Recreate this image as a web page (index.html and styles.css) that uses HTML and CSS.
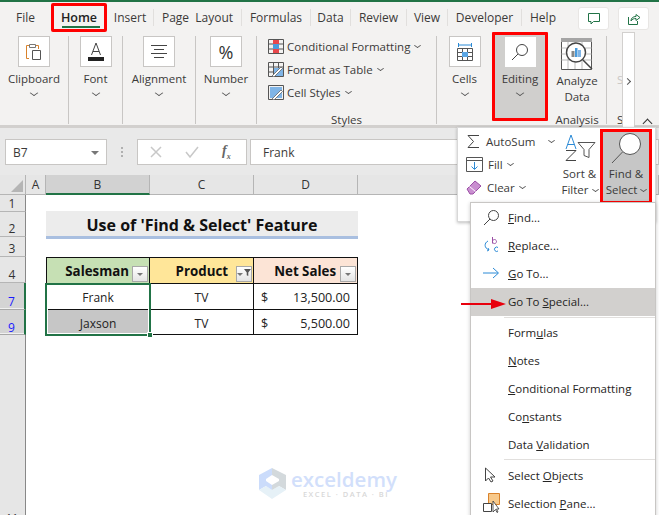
FILE: index.html
```html
<!DOCTYPE html>
<html lang="en">
<head>
<meta charset="utf-8">
<title>Find &amp; Select</title>
<link rel="stylesheet" href="styles.css">
</head>
<body>
<div class="app">
  <div class="topline"></div>
  <nav class="tabs">
    <span class="tab t-file">File</span>
    <span class="tab t-home active">Home</span>
    <span class="tab t-insert">Insert</span>
    <span class="tab t-page">Page Layout</span>
    <span class="tab t-form">Formulas</span>
    <span class="tab t-data">Data</span>
    <span class="tab t-review">Review</span>
    <span class="tab t-view">View</span>
    <span class="tab t-dev">Developer</span>
    <span class="tab t-help">Help</span>
    <span class="tabbtns">
      <span class="tabbtn"><svg width="14" height="14" viewBox="0 0 14 14"><path d="M1.500 1.500h11v8H6.500L4 12V9.500H1.500z" fill="none" stroke="#217346"/></svg></span>
      <span class="tabbtn"><svg width="14" height="14" viewBox="0 0 14 14"><path d="M1.500 5v7.500h9V9M4 9c0-3 2-4.500 5-4.500V2.500L13 5.500 9 8.500V6.500C7 6.500 5 7 4 9z" fill="none" stroke="#217346"/></svg></span>
    </span>
  </nav>
  <section class="ribbon">
    <div class="grp g-clip">
      <span class="bigbtn"><svg width="20" height="20" viewBox="0 0 20 20"><path d="M5 16.500H2.500V3.500H5M12 3.500h2.500V7" fill="none" stroke="#d9822b"/><path d="M5.500 2.500h6v3h-6z" fill="#fff" stroke="#777"/><path d="M8.500 8.500h8v9h-8z" fill="#fff" stroke="#555"/></svg></span>
      <span class="lbl">Clipboard</span><span class="chev"></span>
    </div>
    <div class="grp g-font">
      <span class="bigbtn"><svg width="20" height="22" viewBox="0 0 20 22"><path d="M5.500 14 10 2l4.500 12M7 10.500h6" fill="none" stroke="#444"/><path d="M2 16h16v4H2z" fill="#222"/></svg></span>
      <span class="lbl">Font</span><span class="chev"></span>
    </div>
    <div class="grp g-align">
      <span class="bigbtn"><svg width="20" height="20" viewBox="0 0 20 20"><path d="M2 3.500h16M5 7.500h10M2 11.500h16M5 15.500h10" stroke="#444"/></svg></span>
      <span class="lbl">Alignment</span><span class="chev"></span>
    </div>
    <div class="grp g-num">
      <span class="bigbtn"><span class="pct">%</span></span>
      <span class="lbl">Number</span><span class="chev"></span>
    </div>
    <div class="grp g-styles">
      <div class="stylelist">
        <div class="sl"><svg width="16" height="15" viewBox="0 0 16 15"><path d="M.5.500h15v14H.500zM5.500.500v14M10.500.500v14M.5 5h15M.5 10h15" fill="none" stroke="#555"/><path d="M5 1h6v4H5zM5 10h6v4H5z" fill="#e8474c"/><path d="M5 5h6v5H5z" fill="#4a9bdc"/></svg><span>Conditional Formatting</span><span class="chev inl"></span></div>
        <div class="sl"><svg width="16" height="15" viewBox="0 0 16 15"><path d="M.5.500h15v14H.500zM5.500.500v14M10.500.500v14M.5 5h15M.5 10h15" fill="none" stroke="#555"/><path d="M6 6h9v8H6z" fill="#7fb4e6"/><path d="M4 14 13 5l1.500 1.500L6 15z" fill="#fff" stroke="#555" stroke-width=".7"/></svg><span>Format as Table</span><span class="chev inl"></span></div>
        <div class="sl"><svg width="16" height="15" viewBox="0 0 16 15"><path d="M.5.500h15v14H.500z" fill="none" stroke="#555"/><path d="M2 2h12v11H2z" fill="#7fb4e6"/><path d="M4 14 13 5l1.500 1.500L6 15z" fill="#fff" stroke="#555" stroke-width=".7"/></svg><span>Cell Styles</span><span class="chev inl"></span></div>
      </div>
      <span class="grpname">Styles</span>
    </div>
    <div class="grp g-cells">
      <span class="bigbtn"><svg width="18" height="20" viewBox="0 0 18 20"><path d="M2.500 1v4M15.500 1v4M3 3h12" stroke="#2b8ad6" fill="none"/><path d="M1.500 6.500h15v12h-15zM6.500 6.500v12M11.500 6.500v12M1.500 10.500h15M1.500 14.500h15" fill="none" stroke="#555"/><path d="M6 10h6v5H6z" fill="#5ba6e4"/></svg></span>
      <span class="lbl">Cells</span><span class="chev"></span>
    </div>
    <div class="grp g-edit">
      <span class="bigbtn plain"><svg width="18" height="18" viewBox="0 0 18 18"><circle cx="11" cy="7" r="5.500" fill="#fff" stroke="#444"/><path d="M7 11 1 17" stroke="#444"/></svg></span>
      <span class="lbl">Editing</span><span class="chev"></span>
    </div>
    <div class="grp g-ana">
      <svg class="anaicon" width="32" height="32" viewBox="0 0 32 32"><path d="M.5 3.500h30v28H.5z" fill="#fff" stroke="#555"/><path d="M0 0h31v4H0z" fill="#a5a5a5"/><path d="M.5 10h30M.5 16h30M.5 22h30M7 4v27M14 4v27M21 4v27" stroke="#bbb"/><circle cx="15" cy="14.500" r="9.500" fill="#fff" stroke="#444" stroke-width="1.500"/><path d="M10.500 13h3v6h-3z" fill="#888"/><path d="M14 10h2.500v9H14z" fill="#4a9bdc"/><path d="M17 12h3v7h-3z" fill="#7fb4e6"/><path d="m22 22 9 9" stroke="#444" stroke-width="1.500"/></svg>
      <span class="lbl ana">Analyze<br>Data</span>
      <span class="grpname">Analysis</span>
    </div>
    <div class="grp g-s">
      <span class="lbl faint">S</span>
      <span class="grpname">S</span>
    </div>
    <div class="scrollstrip"><span class="chevr"></span></div>
    <span class="collapse"></span>
  </section>
  <div class="fxbar">
    <div class="namebox"><span>B7</span><span class="tri"></span></div>
    <span class="dots"></span>
    <div class="fxbtns">
      <svg width="12" height="12" viewBox="0 0 12 12"><path d="m1 1 10 10M11 1 1 11" stroke="#c8c8c8" stroke-width="1.500"/></svg>
      <svg width="14" height="12" viewBox="0 0 14 12"><path d="m1 6 4 5 8-10" fill="none" stroke="#c8c8c8" stroke-width="1.500"/></svg>
      <span class="fx">f<sub>x</sub></span>
    </div>
    <div class="fxinput">Frank</div>
  </div>
  <div class="sheet">
    <div class="corner"><span class="corner-tri"></span></div>
    <div class="ch">A</div>
    <div class="ch sel">B</div>
    <div class="ch">C</div>
    <div class="ch">D</div>
    <div class="ch"></div>

    <div class="rh r-1">1</div>
    <div class="rh r-2">2</div>
    <div class="rh r-3">3</div>
    <div class="rh r-4">4</div>
    <div class="rh r-7 hi">7</div>
    <div class="rh r-9 hi">9</div>
    <div class="rh rest"><span class="cut">11</span></div>

    <div class="title r-2">Use of 'Find &amp; Select' Feature</div>

    <div class="th r-4 col-b green">Salesman<span class="fbtn"><span class="tri small"></span></span></div>
    <div class="th r-4 col-c yellow">Product<span class="fbtn"><span class="tri small"></span><svg width="9" height="9" viewBox="0 0 9 9"><path d="M0 0h9L5.500 4.500V9L3.500 8V4.500z" fill="#555"/></svg></span></div>
    <div class="th r-4 col-d peach">Net Sales<span class="fbtn"><span class="tri small"></span></span></div>

    <div class="td r-7 col-b first">Frank</div>
    <div class="td r-7 col-c">TV</div>
    <div class="td r-7 col-d money"><span>$</span><span>13,500.00</span></div>

    <div class="td r-9 col-b gray">Jaxson</div>
    <div class="td r-9 col-c">TV</div>
    <div class="td r-9 col-d money"><span>$</span><span>5,500.00</span></div>

    <div class="selection"><span class="handle"></span></div>
  </div>

  <div class="watermark">
    <svg width="29" height="32" viewBox="0 0 29 32"><path d="M14 0 1 7v15l7-4v-7l6-4z" fill="#cbdcfb"/><path d="M14 0l14 7v15l-7-4v-7l-7-4z" fill="#d3d9dc"/><path d="M1 22l13 9 14-9-7-4-7 4-6-4z" fill="#e6f1f7"/><path d="M8 13l6 4v5l-6-4z" fill="#cbdcfb"/><path d="M21 13l-7 4v5l7-4z" fill="#d3d9dc"/></svg>
    <div class="wm-text"><span class="wm-main">exceldemy</span><span class="wm-sub">EXCEL · DATA · BI</span></div>
  </div>

  <div class="panel">
    <div class="pcol">
      <div class="pl"><svg width="15" height="15" viewBox="0 0 15 15"><path d="M13 1.500H2l5.500 6L2 13.500h11" fill="none" stroke="#444"/></svg><span>AutoSum</span><span class="chev inl far"></span></div>
      <div class="pl"><svg width="17" height="15" viewBox="0 0 17 15"><path d="M.5.500h16v14H.500zM.5 3.500h16" fill="none" stroke="#555"/><path d="M8.500 5v7M5.500 9.500l3 3 3-3" fill="none" stroke="#2b8ad6"/></svg><span>Fill</span><span class="chev inl"></span></div>
      <div class="pl"><svg width="16" height="15" viewBox="0 0 16 15"><path d="M1 9l8-8 6 5-8 8H4z" fill="#c98fd0" stroke="#9b4fa5"/><path d="M3.500 6.500l6 5" stroke="#fff"/></svg><span>Clear</span><span class="chev inl"></span></div>
    </div>
    <div class="pcol sort">
      <svg width="32" height="32" viewBox="0 0 32 32"><path d="m2 19 5-14 5 14M3.800 14.500h6.400" fill="none" stroke="#2b8ad6"/><path d="M2 20.500h10L2 30.500h10" fill="none" stroke="#444"/><path d="M14 12.500h17l-6 7v8l-5-2v-6z" fill="#fff" stroke="#555"/></svg>
      <span class="lbl">Sort &amp;</span>
      <span class="lbl">Filter<span class="chev inl"></span></span>
    </div>
    <div class="pcol find">
      <svg width="38" height="32" viewBox="0 0 38 32"><circle cx="23" cy="11" r="10.500" fill="#fff" stroke="#555"/><path d="M15.500 19 5 30" stroke="#555"/></svg>
      <span class="lbl">Find &amp;</span>
      <span class="lbl">Select<span class="chev inl"></span></span>
    </div>
  </div>

  <div class="menu">
    <div class="mi"><svg class="mic" width="17" height="17" viewBox="0 0 17 17"><circle cx="10.500" cy="6.500" r="5" fill="none" stroke="#444"/><path d="M7 10 1 16" stroke="#444"/></svg><span><u>F</u>ind...</span></div>
    <div class="mi"><svg class="mic" width="17" height="18" viewBox="0 0 17 18"><path d="M5 5C1 7 1 12 6 14M4 15l2-1-1-2" fill="none" stroke="#2b8ad6"/><path d="M9.500 1v6.500M9.500 5.500a2 2 0 1 1 0 .1" fill="none" stroke="#9b4fa5"/><path d="M15 11.500a2.200 2.200 0 1 0 0 3.500" fill="none" stroke="#2b8ad6"/></svg><span><u>R</u>eplace...</span></div>
    <div class="mi"><svg class="mic" width="17" height="12" viewBox="0 0 17 12"><path d="M0 6h15M10 1l5.500 5-5.500 5" fill="none" stroke="#2b8ad6"/></svg><span><u>G</u>o To...</span></div>
    <div class="mi hl"><span class="mic"></span><span>Go To <u>S</u>pecial...</span></div>
    <div class="sep sep1"></div>
    <div class="mi"><span class="mic"></span><span>Form<u>u</u>las</span></div>
    <div class="mi"><span class="mic"></span><span><u>N</u>otes</span></div>
    <div class="mi"><span class="mic"></span><span><u>C</u>onditional Formatting</span></div>
    <div class="mi"><span class="mic"></span><span>Co<u>n</u>stants</span></div>
    <div class="mi"><span class="mic"></span><span>Data <u>V</u>alidation</span></div>
    <div class="sep sep2"></div>
    <div class="mi"><svg class="mic" width="17" height="17" viewBox="0 0 17 17"><path d="M2.500 1v13l3-3 2.500 4 2-1-2.500-4H12z" fill="#fff" stroke="#444"/></svg><span>Select <u>O</u>bjects</span></div>
    <div class="mi"><svg class="mic" width="17" height="20" viewBox="0 0 17 20"><path d="M5.500.500h11v11h-11z" fill="#f7c98b" stroke="#d9822b"/><path d="M.5 10.500h8v8h-8z" fill="#fff" stroke="#444"/><path d="M10 8v11l2.500-2.500 1.500 3 1-.5-1.500-3H16z" fill="#fff" stroke="#333" stroke-width=".8"/></svg><span>Selection <u>P</u>ane...</span></div>
  </div>

  <svg class="redarrow" width="46" height="10" viewBox="0 0 46 10"><path d="M0 4h30v-4l15 5-15 5V6H0z" fill="#e8000d"/></svg>
</div>
</body>
</html>
```

FILE: styles.css
```css
* { box-sizing: border-box; }
html, body { margin: 0; padding: 0; height: 100%; }
body { font-family: "Open Sans", "Noto Sans", sans-serif; font-size: 12px; color: #3b3a39; background: #fff; overflow: hidden; }
.app { position: relative; width: 659px; height: 515px; overflow: hidden; display: flex; flex-direction: column; }

.topline { height: 2px; background: #217346; flex: none; }

.tabs { height: 30px; flex: none; background: #f3f2f1; display: flex; align-items: center; font-size: 12px; color: #3b3a39; }
.tab { display: flex; align-items: center; justify-content: center; height: 17px; border-right: 1px solid #e1dfdd; flex: none; }
.t-file { width: 51px; border-right: 0; }
.t-home { width: 56px; border-right: 0; height: 30px; position: relative; color: #222; font-weight: 600; font-size: 12.5px; }
.t-home::before { content: ""; position: absolute; left: 0; right: 0; top: 1px; bottom: 0; border: 3px solid #f00; border-radius: 2px; }
.t-home::after { content: ""; position: absolute; left: 11px; right: 7px; bottom: 4px; height: 2px; background: #217346; }
.t-insert { width: 47px; }
.t-page { width: 88px; word-spacing: 3px; }
.t-form { width: 69px; }
.t-data { width: 40px; }
.t-review { width: 56px; }
.t-view { width: 41px; }
.t-dev { width: 74px; }
.t-help { width: 42px; border-right: 0; }
.tabbtns { display: flex; gap: 9px; margin-left: 14px; margin-top: 3px; }
.tabbtn { width: 31px; height: 23px; background: #fff; border: 1px solid #e8e6e4; border-radius: 3px; display: flex; align-items: center; justify-content: center; }

.ribbon { height: 96px; flex: none; background: #f3f2f1; display: flex; position: relative; border-bottom: 3px solid #d2d0ce; }
.grp { flex: none; position: relative; display: flex; flex-direction: column; align-items: center; height: 88px; margin-top: 4px; border-right: 1px solid #c8c6c4; }
.g-clip { width: 69px; }
.g-font { width: 54px; }
.g-align { width: 73px; }
.g-num { width: 61px; }
.g-styles { width: 180px; align-items: flex-start; padding-left: 11px; }
.g-cells { width: 55px; border-right: 0; }
.g-edit { width: 56px; height: 89px; margin-top: 0; background: #d0cfcd; border: 3px solid #f00; border-radius: 1px; padding-top: 2px; }
.g-ana { width: 59px; }
.g-s { width: 15px; border-right: 0; align-items: flex-start; padding-left: 10px; }
.bigbtn { width: 32px; height: 31px; background: #fff; border: 1px solid #c8c6c4; display: flex; align-items: center; justify-content: center; }
.bigbtn.plain { border: 0; width: 31px; height: 30px; }
.pct { font-size: 18px; color: #333; line-height: 1; }
.lbl { font-size: 11.5px; line-height: 16px; color: #3b3a39; white-space: nowrap; }
.bigbtn + .lbl { margin-top: 4px; line-height: 16px; height: 17px; }
.chev { display: block; width: 6px; height: 6px; border-right: 1px solid #555; border-bottom: 1px solid #555; transform: scaleY(.7) rotate(45deg); margin-top: 2px; }
.chev.inl { display: inline-block; width: 5px; height: 5px; margin: 0 0 3px 5px; vertical-align: middle; }
.stylelist { display: flex; flex-direction: column; gap: 3px; }
.sl { display: flex; align-items: center; height: 20px; gap: 3px; white-space: nowrap; font-size: 11.5px; }
.sl .chev.inl { margin: -2px 0 0 2px; }
.grpname { position: absolute; left: 0; right: 0; top: 76px; text-align: center; font-size: 11.5px; line-height: 16px; }
.g-ana .anaicon { margin-top: 2px; }
.lbl.ana { text-align: center; margin-top: 3px; }
.g-s .lbl.faint { color: #c8c6c4; margin-top: 36px; }
.g-s .grpname { text-align: left; left: 10px; }
.scrollstrip { flex: none; width: 13px; background: #fff; border: 1px solid #d2d0ce; border-bottom: 0; position: relative; height: 96px; }
.chevr { position: absolute; left: 2px; top: 46px; width: 5px; height: 5px; border-right: 1px solid #555; border-top: 1px solid #555; transform: rotate(45deg); }
.collapse { position: absolute; left: 644px; top: 88px; width: 7px; height: 7px; border-left: 1px solid #333; border-top: 1px solid #333; transform: rotate(45deg); z-index: 2; }

.fxbar { height: 47px; flex: none; background: #e9e9e9; display: flex; align-items: flex-start; padding: 11px 0 0 5px; }
.namebox { width: 102px; height: 26px; background: #fff; border: 1px solid #c8c6c4; display: flex; align-items: center; justify-content: space-between; padding: 1px 7px 0; font-size: 12px; }
.tri { width: 0; height: 0; border-left: 4px solid transparent; border-right: 4px solid transparent; border-top: 4px solid #777; }
.tri.small { border-left-width: 3px; border-right-width: 3px; border-top-width: 3px; }
.dots { width: 2px; height: 10px; margin: 8px 14px 0; background: repeating-linear-gradient(#b0b0b0 0 2px, transparent 2px 4px); }
.fxbtns { width: 110px; height: 26px; background: #fff; border: 1px solid #c8c6c4; display: flex; align-items: center; gap: 23px; padding-left: 12px; }
.fx { font-family: "Liberation Serif", serif; font-style: italic; font-weight: 700; font-size: 14px; color: #666; }
.fx sub { font-size: 8px; }
.fxinput { flex: 1; height: 26px; margin-left: 3px; background: #fff; border: 1px solid #c8c6c4; padding-left: 12px; line-height: 26px; font-size: 12px; }

.sheet { flex: 1; position: relative; display: grid; grid-template-columns: 26px 20px 104px 104px 104px 1fr; grid-template-rows: 20px 17px 25px 20px 26px 27px 25px 1fr; background: #fff; }
.corner { background: #e6e6e6; border-right: 1px solid #b5b5b5; border-bottom: 1px solid #b5b5b5; position: relative; }
.corner-tri { position: absolute; right: 2px; bottom: 2px; border-left: 12px solid transparent; border-bottom: 12px solid #b5b5b5; }
.ch { background: #e6e6e6; border-right: 1px solid #b5b5b5; border-bottom: 1px solid #b5b5b5; text-align: center; font-size: 12px; line-height: 19px; color: #333; }
.ch.sel { background: #d2d2d2; border-bottom: 2px solid #217346; }
.rh { grid-column: 1; background: #e6e6e6; border-right: 1px solid #888; border-bottom: 1px solid #b5b5b5; font-size: 12px; line-height: 1; color: #333; display: flex; align-items: flex-end; justify-content: center; padding: 0 1px 1px 0; }
.rh.hi { background: #d4d4d4; color: #1a1aff; border-right: 2px solid #217346; border-bottom: 1px solid #a8a8a8; box-shadow: inset 0 -1px 0 #f0f0f0; }
.rh.r-9 { padding-bottom: 0; }
.rh.rest { grid-row: 8; border-bottom: 0; padding-bottom: 0; }
.cut { margin-bottom: -8px; font-size: 11px; }
.r-1 { grid-row: 2; }
.r-2 { grid-row: 3; }
.r-3 { grid-row: 4; }
.r-4 { grid-row: 5; }
.r-7 { grid-row: 6; }
.r-9 { grid-row: 7; }
.col-b { grid-column: 3; }
.col-c { grid-column: 4; }
.col-d { grid-column: 5; }
.title { grid-column: 3 / 6; height: 28px; margin-top: -1px; background: #ececec; border-bottom: 3px solid #a9bfe0; font-weight: 700; font-size: 16px; color: #111; text-align: center; line-height: 28px; }
.th { border: 1px solid #111; border-width: 1px 1px 1px 0; display: flex; align-items: center; justify-content: flex-end; font-weight: 700; font-size: 13.3px; color: #111; position: relative; height: 27px; padding-top: 1px; }
.green { background: #c6e0b4; border-left-width: 1px; }
.yellow { background: #ffe699; }
.peach { background: #fce4d6; }
.th.green { padding-right: 20px; }
.th.yellow { padding-right: 25px; }
.th.peach { padding-right: 21px; }
.fbtn { position: absolute; right: 1px; bottom: 1px; width: 16px; height: 16px; background: linear-gradient(#fff, #e4e4e4); border: 1px solid #a8a8a8; display: flex; align-items: center; justify-content: center; }
.fbtn svg { margin-left: 1px; margin-top: -3px; }
.td { border-right: 1px solid #111; border-bottom: 1px solid #111; display: flex; align-items: center; justify-content: center; font-size: 12px; color: #222; padding-top: 2px; }
.td.first, .td.gray { border-left: 1px solid #111; }
.td.gray { background: #c6c6c6; }
.td.money { justify-content: space-between; padding: 2px 7px 0; font-size: 12.6px; }
.selection { grid-column: 3; grid-row: 6 / 8; border: 2px solid #217346; position: relative; margin: 0 -1px -1px -1px; box-shadow: inset 0 0 0 1px #fff; pointer-events: none; }
.handle { position: absolute; right: -4px; bottom: -4px; background: #217346; border: 1px solid #fff; box-sizing: content-box; width: 4px; height: 4px; }

.watermark { position: absolute; left: 258px; top: 468px; display: flex; gap: 4px; align-items: flex-start; }
.wm-text { display: flex; flex-direction: column; width: 110px; }
.wm-main { font-size: 20.5px; font-weight: 600; color: #d2dffb; line-height: 22px; height: 22px; }
.wm-sub { font-size: 7.5px; color: #d8d8d8; line-height: 9px; text-align: center; letter-spacing: 1.5px; font-weight: 600; white-space: nowrap; }

.panel { position: absolute; left: 457px; top: 127px; width: 199px; height: 95px; background: #fff; border: 1px solid #d8d8d8; box-shadow: 0 1px 3px rgba(0,0,0,.25); display: flex; }
.pcol { display: flex; flex-direction: column; }
.pcol:first-child { width: 99px; padding: 2px 0 0 8px; }
.pl { height: 23px; display: flex; align-items: center; gap: 5px; font-size: 11.5px; white-space: nowrap; }
.pl .chev.inl { margin: -2px 0 0 0; }
.pl .chev.far { margin-left: 9px; }
.sort { width: 44px; align-items: center; padding: 2px 0 0 1px; }
.sort svg + .lbl { margin-top: 4px; }
.find { position: absolute; left: 142px; top: 1px; width: 52px; height: 75px; background: #c6c6c6; border: 3px solid #f00; align-items: center; padding-top: 1px; }
.find svg + .lbl { margin-top: 1px; }
.lbl .chev.inl { margin-left: 4px; }

.menu { position: absolute; left: 470px; top: 202px; width: 186px; height: 320px; background: #fff; border: 1px solid #c8c6c4; box-shadow: 0 1px 4px rgba(0,0,0,.2); padding-top: 1px; font-size: 11.5px; color: #252423; }
.mi { height: 28px; display: flex; align-items: center; white-space: nowrap; padding-bottom: 2px; }
.mi.hl { background: #d2d0ce; }
.mic { width: 17px; margin-right: 20px; flex: none; position: relative; left: 12px; }
.sep { height: 1px; background: #e1dfdd; margin-left: 33px; }
.sep1 { margin: 1px 0 1px 33px; }
.sep2 { margin-bottom: 2px; }
.redarrow { position: absolute; left: 461px; top: 299px; }
```
